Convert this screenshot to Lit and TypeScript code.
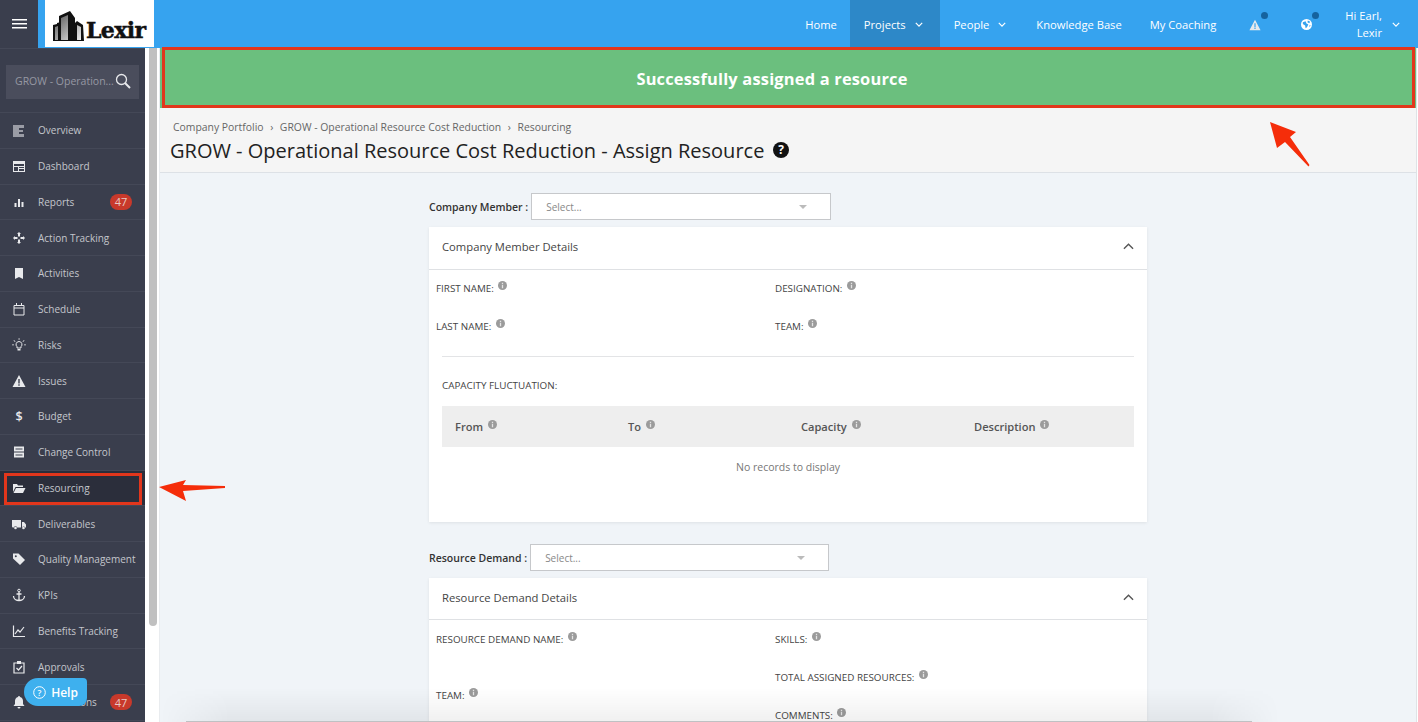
import { LitElement, html, css, svg } from "lit";
import { customElement } from "lit/decorators.js";

const w = "#e8e9ec";
const icons: Record<string, any> = {
  overview: svg`<path fill="#9a9ca5" d="M1 2h11v3H7v2h4v2H7v2h5v3H1z"/>`,
  dashboard: svg`<path fill="${w}" fill-rule="evenodd" d="M1 2h12v11H1zM2 5v2h10V5zm0 3v4h4V8zm5 0v1h5V8zm0 2v2h5v-2z"/>`,
  reports: svg`<path fill="${w}" d="M2.500 8h2v4h-2zM6 4h2v8H6zM9.500 7h2v5h-2z"/>`,
  action: svg`<path fill="${w}" d="M7 1l2 2H8v2.500H6V3H5zM7 13l-2-2h1V8.500h2V11h1zM1 7l2-2v1h2.500v2H3v1zM13 7l-2 2V8H8.500V6H11V5z"/>`,
  activities: svg`<path fill="${w}" d="M3 2h8v11l-4-2-4 2z"/>`,
  schedule: svg`<path fill="none" stroke="${w}" d="M2 3.500h10v9.500H2zM2 6h10"/><path fill="${w}" d="M4 1h1v2H4zM9 1h1v2H9z"/>`,
  risks: svg`<path fill="none" stroke="${w}" d="M7 3.500a3 3 0 0 1 2 5.200V10H5V8.700a3 3 0 0 1 2-5.200z"/><path fill="${w}" d="M5.500 11h3v1.500h-3zM6.700 0h.7v2h-.7zM0 6.500h2v.7H0zM12 6.500h2v.7h-2zM2 2l1.500 1.500-.5.500L1.500 2.500zM12 2l-1.500 1.500.5.500 1.500-1.500z"/>`,
  issues: svg`<path fill="${w}" fill-rule="evenodd" d="M7 1l6.500 12H.5zM6.300 5v4.500h1.400V5zm0 5.300v1.400h1.400v-1.400z"/>`,
  budget: svg`<text x="7" y="12" text-anchor="middle" class="dollar">$</text>`,
  change: svg`<path fill="${w}" fill-rule="evenodd" d="M2 1.500h10v5H2zM2 7.500h10v5H2zM3.500 3.500v1h7v-1zM3.500 9.500v1h7v-1z"/>`,
  resourcing: svg`<path fill="${w}" d="M1 3h4l1 1.500h5V6H3.500L1 11zM4 7h9.500l-2.500 5H1.500z"/>`,
  deliverables: svg`<path fill="${w}" d="M0 3h9v7.500H5.200a1.800 1.800 0 0 0-3.400 0H1a1 1 0 0 1-1-1zM10 5h2l2 2.500v3h-.8a1.800 1.800 0 0 0-3.200 0z"/><circle cx="3.500" cy="11" r="1.300" fill="${w}"/><circle cx="11.500" cy="11" r="1.300" fill="${w}"/>`,
  quality: svg`<path fill="${w}" d="M1 1.500h5.500L13 8l-5 5-7-6.500z"/><circle cx="3.800" cy="4.200" r="1" fill="#3a3e4d"/>`,
  kpis: svg`<circle cx="7" cy="2.500" r="1.300" fill="none" stroke="${w}"/><path fill="none" stroke="${w}" stroke-width="1.300" d="M7 4v9M4.500 6h5M1.500 8c0 3 3 4.500 5.500 4.500s5.500-1.500 5.500-4.500"/>`,
  benefits: svg`<path fill="none" stroke="${w}" stroke-width="1.200" d="M1.500 1.500v11h11.500M3 10l3-4 2 2 4-5"/>`,
  approvals: svg`<path fill="none" stroke="${w}" stroke-width="1.200" d="M2 3h10v10H2zM4.500 8l2 2 3.500-4"/><path fill="${w}" d="M5 1h4v3H5z"/>`,
  notifications: svg`<path fill="${w}" d="M7 1a1 1 0 0 1 1 1c2 .5 3 2.200 3 4v3l1.500 2h-11L3 9V6c0-1.800 1-3.500 3-4a1 1 0 0 1 1-1zM5.500 12h3a1.500 1.500 0 0 1-3 0z"/>`,
};

const navItems: [string, string, string?][] = [
  ["overview", "Overview"],
  ["dashboard", "Dashboard"],
  ["reports", "Reports", "47"],
  ["action", "Action Tracking"],
  ["activities", "Activities"],
  ["schedule", "Schedule"],
  ["risks", "Risks"],
  ["issues", "Issues"],
  ["budget", "Budget"],
  ["change", "Change Control"],
  ["resourcing", "Resourcing"],
  ["deliverables", "Deliverables"],
  ["quality", "Quality Management"],
  ["kpis", "KPIs"],
  ["benefits", "Benefits Tracking"],
  ["approvals", "Approvals"],
  ["notifications", "Notifications", "47"],
];

const info = html`<svg class="info" viewBox="0 0 10 10"><circle cx="5" cy="5" r="5" fill="#9b9b9b"/><path fill="#e4e4e4" d="M4.300 4.300h1.400V8H4.300zM4.300 2h1.400v1.400H4.300z"/></svg>`;
const chev = html`<svg class="chev" viewBox="0 0 10 6"><path fill="none" stroke="#fff" stroke-width="1.500" d="M1 1l4 4 4-4"/></svg>`;
const up = html`<svg class="up" viewBox="0 0 12 7"><path fill="none" stroke="#555" stroke-width="1.500" d="M1 6l5-5 5 5"/></svg>`;
const field = (t: string) => html`<div class="field">${t}: ${info}</div>`;
const select = (cls: string) => html`<div class="select ${cls}"><span>Select...</span><i class="caret"></i></div>`;

@customElement("app-root")
export class AppRoot extends LitElement {
  static styles = css`
    :host { display: block; width: 1418px; height: 722px; overflow: hidden; position: relative; font-family: "Open Sans", sans-serif; background: #fff; color: #333; }
    * { box-sizing: border-box; }
    .top { display: flex; height: 48px; background: #36a3ef; }
    .burger { width: 38px; background: #3a3e4d; display: flex; align-items: center; justify-content: center; }
    .burger svg { width: 15px; height: 12px; }
    .logo { margin-left: 7px; width: 109px; height: 47px; background: #fff; display: flex; align-items: center; padding-left: 8px; gap: 2px; }
    .logo svg { width: 31px; height: 31px; flex: none; margin-top: 5px; }
    .logo b { font: 700 22px/1 "DejaVu Serif", serif; color: #111; letter-spacing: -.6px; margin-top: 12px; -webkit-text-stroke: .5px #111; }
    .topnav { margin-left: auto; display: flex; align-items: stretch; color: #fff; font-size: 11.200px; }
    .tn { display: flex; align-items: center; padding: 0 13.500px; gap: 9px; white-space: nowrap; }
    .tn.home { padding: 0 13px; }
    .tn.active { background: #2d88c8; padding: 0 17px 0 14px; }
    .tn.people { padding: 0 16.500px 0 14px; }
    .tn.kb { padding-right: 14.500px; }
    .tn.coach { padding-right: 13px; }
    .tn.ic { position: relative; padding: 0 20px; }
    .chev { width: 8px; height: 5px; }
    .g1 { width: 12px; height: 12px; margin-top: 2px; }
    .g2 { width: 11px; height: 11px; }
    .dot { position: absolute; width: 7px; height: 7px; border-radius: 50%; background: #15639f; top: 12px; right: 13.500px; }
    .user { display: flex; align-items: center; gap: 10px; padding: 0 18px 0 13px; text-align: right; line-height: 17px; white-space: nowrap; }
    .body { display: flex; height: 674px; }
    .side { width: 145px; background: #3a3e4d; flex: none; color: #c4c6cc; }
    .searchbox { height: 65px; padding: 16px 6px 0; border-top: 1px solid #444857; border-bottom: 1px solid #444857; }
    .search { height: 34px; background: #4a4d5c; display: flex; align-items: center; padding: 0 8px 2px 9px; font-size: 10.500px; color: #9698a3; justify-content: space-between; white-space: nowrap; }
    .search svg { width: 16px; height: 16px; flex: none; }
    .nav { display: flex; flex-direction: column; }
    .item { height: 35.750px; flex: none; border-bottom: 1px solid #444857; display: flex; align-items: center; font-size: 10px; padding-left: 12px; white-space: nowrap; overflow: hidden; }
    .item.sel { background: #2b2e3b; }
    .item svg { width: 14px; height: 14px; flex: none; margin-right: 12px; }
    .dollar { fill: #e8e9ec; font: 600 12.500px "Open Sans", sans-serif; }
    .badge { margin-left: auto; margin-right: 13px; width: 22px; height: 16px; border-radius: 8px; background: #c8392b; color: #e9c9c5; font-size: 11px; display: flex; align-items: center; justify-content: center; }
    .sb { width: 14px; flex: none; background: #fff; padding: 0 2px 0 4px; }
    .thumb { height: 578px; background: #c0c0c0; border-radius: 0 0 4px 4px; }
    .main { flex: 1; min-width: 0; background: #f0f4f8; border-left: 1px solid #e9ecef; border-right: 1px solid #dfe3e6; margin-right: 1px; }
    .banner { height: 60px; background: #6bbf7e; color: #fff; font-size: 16.400px; font-weight: 700; display: flex; align-items: center; justify-content: center; letter-spacing: .2px; padding-right: 32px; }
    .head { height: 65px; background: #f5f5f5; border-bottom: 1px solid #dde1e6; padding: 12px 0 0 10px; }
    .crumbs { font-size: 10.400px; color: #666; padding-left: 3px; display: flex; gap: 6.600px; }
    .title { font-size: 20px; line-height: 27px; color: #222; margin-top: 3px; display: flex; align-items: center; gap: 9px; white-space: nowrap; }
    .title svg { width: 16px; height: 16px; margin-top: -2px; }
    .content { width: 718px; margin: 20px 0 0 269px; }
    .selrow { display: flex; align-items: center; height: 27px; font-size: 10.500px; font-weight: 600; color: #333; }
    .select { margin-left: 3px; width: 300px; height: 27px; background: #fff; border: 1px solid #c6c8cb; display: flex; align-items: center; justify-content: space-between; padding: 0 23px 0 14px; font-size: 10px; font-weight: 400; color: #888; }
    .select.s2 { width: 299px; }
    .caret { width: 0; height: 0; border: 4px solid transparent; border-top: 4px solid #bbb; border-bottom: 0; }
    .card { background: #fff; margin-top: 7px; box-shadow: 0 1px 3px rgba(0,0,0,.08); }
    .card.c1 { height: 295px; }
    .card.c2 { height: 220px; }
    .chead { height: 43px; border-bottom: 1px solid #dfe1e4; display: flex; align-items: center; justify-content: space-between; padding: 0 13px 3px 13px; font-size: 11.250px; color: #444; }
    .c2 .chead { height: 42px; padding-bottom: 2px; }
    .up { width: 11px; height: 7px; }
    .grid { display: grid; grid-template-columns: 339px 1fr; padding: 0 7px; }
    .c2 .grid { padding-top: 1px; }
    .field { font-size: 9.850px; color: #444; height: 38px; padding-top: 11px; white-space: nowrap; text-transform: uppercase; }
    .info { width: 9px; height: 9px; vertical-align: 2px; margin-left: 2px; }
    .inner { padding: 0 13px; }
    .rule { border-top: 1px solid #e3e4e6; margin-top: 10px; }
    .cf { font-size: 9.850px; color: #444; margin-top: 21px; height: 28px; }
    .thead { height: 41px; background: #eee; display: grid; grid-template-columns: repeat(4, 173px); align-items: center; padding-left: 13px; font-size: 11.100px; font-weight: 600; color: #555; }
    .none { text-align: center; font-size: 10.500px; color: #777; margin-top: 13px; }
    .c2wrap { margin-top: 22px; }
    .col { display: flex; flex-direction: column; }
    .team { margin-top: 18px; }
    .annot { position: absolute; pointer-events: none; }
    .frame { border: 3px solid #e2361c; }
    .f1 { left: 162px; top: 47px; width: 1253px; height: 61px; }
    .f2 { left: 4px; top: 473px; width: 138px; height: 32px; }
    .help { position: absolute; left: 24px; top: 678px; width: 63px; height: 28px; background: #3eb0ee; border-radius: 14px 4px 8px 14px; color: #fff; font-size: 12px; font-weight: 600; display: flex; align-items: center; justify-content: center; gap: 5px; }
    .help svg { width: 13px; height: 13px; }
    .fade { position: absolute; left: 160px; width: 1120px; top: 688px; height: 34px; background: linear-gradient(rgba(0,0,0,0), rgba(0,0,0,.06)); -webkit-mask-image: linear-gradient(to right, transparent, #000 70px, #000 calc(100% - 70px), transparent); mask-image: linear-gradient(to right, transparent, #000 70px, #000 calc(100% - 70px), transparent); }
    .fadeline { position: absolute; left: 186px; width: 1066px; top: 721px; height: 1px; background: #bfc1c3; }
  `;

  render() {
    return html`
      <div class="top">
        <div class="burger"><svg viewBox="0 0 15 12"><path fill="#fff" d="M0 1h15v1.500H0zM0 5h15v1.500H0zM0 9h15v1.500H0z"/></svg></div>
        <div class="logo">
          <svg viewBox="0 0 31 31">
            <defs><linearGradient id="lg" x1="0" x2="1" y1="0" y2="1"><stop offset="0" stop-color="#555"/><stop offset="1" stop-color="#eee"/></linearGradient></defs>
            <path fill="#111" d="M0 30V14l4-1v-1l2-.5V5l11-5 5 7v5l2-2 6 4 1 16z"/>
            <path fill="url(#lg)" d="M2 29V16l3-1v14zM8 29V7l7-3v25zM24 29V14l4 2v13z"/>
          </svg>
          <b>Lexir</b>
        </div>
        <nav class="topnav">
          <div class="tn home">Home</div>
          <div class="tn active">Projects ${chev}</div>
          <div class="tn people">People ${chev}</div>
          <div class="tn kb">Knowledge Base</div>
          <div class="tn coach">My Coaching</div>
          <div class="tn ic"><svg class="g1" viewBox="0 0 14 14">${icons.issues}</svg><i class="dot"></i></div>
          <div class="tn ic"><svg class="g2" viewBox="0 0 12 12"><circle cx="6" cy="6" r="6" fill="#fff"/><path fill="#36a3ef" d="M2 3.500l3-1 1 2.500 2 1-1.500 3-1.500 1-.5-3-2.500-1.500zM7.500 1.500l2.500 1.500-1 1.500-2-1zM9 7l1.500-.5-1 2.500z"/></svg><i class="dot"></i></div>
          <div class="user"><span>Hi Earl,<br />Lexir</span>${chev}</div>
        </nav>
      </div>
      <div class="body">
        <aside class="side">
          <div class="searchbox">
            <div class="search"><span>GROW - Operation...</span><svg viewBox="0 0 16 16"><circle cx="6.500" cy="6.500" r="5" fill="none" stroke="#e8e9ec" stroke-width="1.300"/><path stroke="#e8e9ec" stroke-width="2" d="M10 10l5 5"/></svg></div>
          </div>
          <div class="nav">
            ${navItems.map(([ic, label, badge]) => html`
              <div class="item ${label === "Resourcing" ? "sel" : ""}">
                <svg viewBox="0 0 14 14">${icons[ic]}</svg>
                <span>${label}</span>
                ${badge ? html`<span class="badge">${badge}</span>` : ""}
              </div>`)}
          </div>
        </aside>
        <div class="sb"><div class="thumb"></div></div>
        <main class="main">
          <div class="banner">Successfully assigned a resource</div>
          <div class="head">
            <div class="crumbs"><span>Company Portfolio</span><span>›</span><span>GROW - Operational Resource Cost Reduction</span><span>›</span><span>Resourcing</span></div>
            <div class="title">GROW - Operational Resource Cost Reduction - Assign Resource
              <svg viewBox="0 0 16 16"><circle cx="8" cy="8" r="8" fill="#111"/><text x="8" y="12" text-anchor="middle" font-size="12" font-weight="700" fill="#fff">?</text></svg>
            </div>
          </div>
          <div class="content">
            <div class="selrow">Company Member : ${select("s1")}</div>
            <section class="card c1">
              <div class="chead"><span>Company Member Details</span>${up}</div>
              <div class="grid">
                ${field("First Name")}${field("Designation")}
                ${field("Last Name")}${field("Team")}
              </div>
              <div class="inner">
                <div class="rule"></div>
                <div class="cf">CAPACITY FLUCTUATION:</div>
                <div class="thead">
                  <span>From ${info}</span><span>To ${info}</span><span>Capacity ${info}</span><span>Description ${info}</span>
                </div>
                <div class="none">No records to display</div>
              </div>
            </section>
            <div class="c2wrap selrow">Resource Demand : ${select("s2")}</div>
            <section class="card c2">
              <div class="chead"><span>Resource Demand Details</span>${up}</div>
              <div class="grid">
                <div class="col">${field("Resource Demand Name")}<div class="team">${field("Team")}</div></div>
                <div class="col">${field("Skills")}${field("Total Assigned Resources")}${field("Comments")}</div>
              </div>
            </section>
          </div>
        </main>
      </div>
      <div class="annot frame f1"></div>
      <div class="annot frame f2"></div>
      <svg class="annot" style="left:1265px;top:115px" width="50" height="58" viewBox="0 0 50 58"><path fill="#f52d0a" d="M5 7L31 17 25 22 44.500 50 43.500 51.500 20 27 12 33z"/></svg>
      <svg class="annot" style="left:155px;top:470px" width="75" height="36" viewBox="0 0 75 36"><path fill="#f52d0a" d="M4 17L31 10l-3 5 42 1v2l-42 3 3 10z"/></svg>
      <div class="help"><svg viewBox="0 0 13 13"><circle cx="6.500" cy="6.500" r="5.800" fill="none" stroke="#fff"/><text x="6.500" y="9.500" text-anchor="middle" font-size="8.500" fill="#fff">?</text></svg>Help</div>
      <div class="fade"></div>
      <div class="fadeline"></div>
    `;
  }
}
